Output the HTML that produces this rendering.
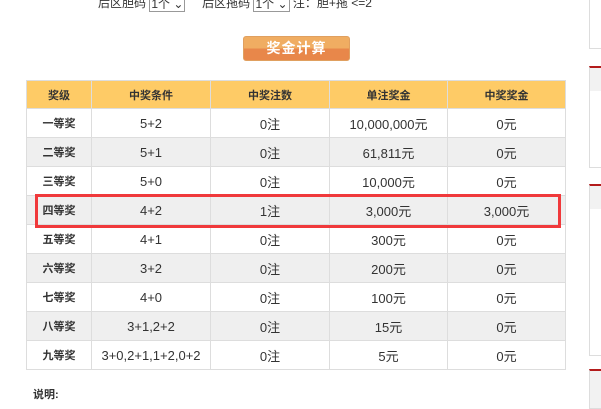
<!DOCTYPE html>
<html><head><meta charset="utf-8"><style>
*{margin:0;padding:0;box-sizing:border-box}
body{width:601px;height:401px;overflow:hidden;background:#fff;font-family:"Liberation Sans","Noto Sans CJK SC",sans-serif;font-size:12px;color:#333;position:relative}
.top{position:absolute;top:-6px;left:98px;font-size:12px;color:#333;white-space:nowrap}
.sel{display:inline-block;border:1px solid #999;height:16px;padding:0 1px;line-height:14px;vertical-align:middle;background:#fff;font-size:12px}
.btn{position:absolute;left:243px;top:36px;width:107px;height:25px;border-radius:3px;border:1px solid #e0a060;background:linear-gradient(#f0ad62 0,#f0ad62 50%,#e8874a 50%,#e8874a 100%);color:#fff;font-size:14px;font-weight:bold;text-align:center;line-height:23px;letter-spacing:1px}
table{position:absolute;left:26px;top:80px;width:540px;border-collapse:collapse}
td,th{border:1px solid #ddd;text-align:center;height:29px;font-size:13px;font-weight:normal}
th{background:#fecb66;height:28px;font-weight:bold;color:#333;font-size:11px}
td:first-child{font-weight:bold;font-size:11px}
tr:nth-child(odd) td{background:#efefef}
.hl{position:absolute;left:35px;top:194px;width:526px;height:34px;border:3px solid #f0393b}
.sm{position:absolute;left:33px;top:386px;font-weight:bold;font-size:11px}
.side{position:absolute;left:589px;width:20px;border:1px solid #ddd}
.side.r{border-top:2px solid #b31b1b}
</style></head><body>
<div class="top">后区胆码 <span class="sel">1个 ⌄</span> &nbsp;&nbsp;&nbsp;&nbsp;后区拖码 <span class="sel">1个 ⌄</span> 注：胆+拖 &lt;=2</div>
<div class="btn">奖金计算</div>
<table>
<tr><th style="width:65px">奖级</th><th style="width:119px">中奖条件</th><th style="width:119px">中奖注数</th><th style="width:118px">单注奖金</th><th>中奖奖金</th></tr>
<tr><td>一等奖</td><td>5+2</td><td>0注</td><td>10,000,000元</td><td>0元</td></tr>
<tr><td>二等奖</td><td>5+1</td><td>0注</td><td>61,811元</td><td>0元</td></tr>
<tr><td>三等奖</td><td>5+0</td><td>0注</td><td>10,000元</td><td>0元</td></tr>
<tr><td>四等奖</td><td>4+2</td><td>1注</td><td>3,000元</td><td>3,000元</td></tr>
<tr><td>五等奖</td><td>4+1</td><td>0注</td><td>300元</td><td>0元</td></tr>
<tr><td>六等奖</td><td>3+2</td><td>0注</td><td>200元</td><td>0元</td></tr>
<tr><td>七等奖</td><td>4+0</td><td>0注</td><td>100元</td><td>0元</td></tr>
<tr><td>八等奖</td><td>3+1,2+2</td><td>0注</td><td>15元</td><td>0元</td></tr>
<tr><td>九等奖</td><td>3+0,2+1,1+2,0+2</td><td>0注</td><td>5元</td><td>0元</td></tr>
</table>
<div class="hl"></div>
<div class="sm">说明:</div>
<div class="side" style="top:-2px;height:51px"></div>
<div class="side r" style="top:66px;height:102px;background:linear-gradient(#f2f2f2 0,#f2f2f2 23px,#fff 23px)"></div>
<div class="side r" style="top:184px;height:172px;background:linear-gradient(#f2f2f2 0,#f2f2f2 23px,#fff 23px)"></div>
<div class="side r" style="top:369px;height:40px;background:#f2f2f2"></div>
</body></html>
